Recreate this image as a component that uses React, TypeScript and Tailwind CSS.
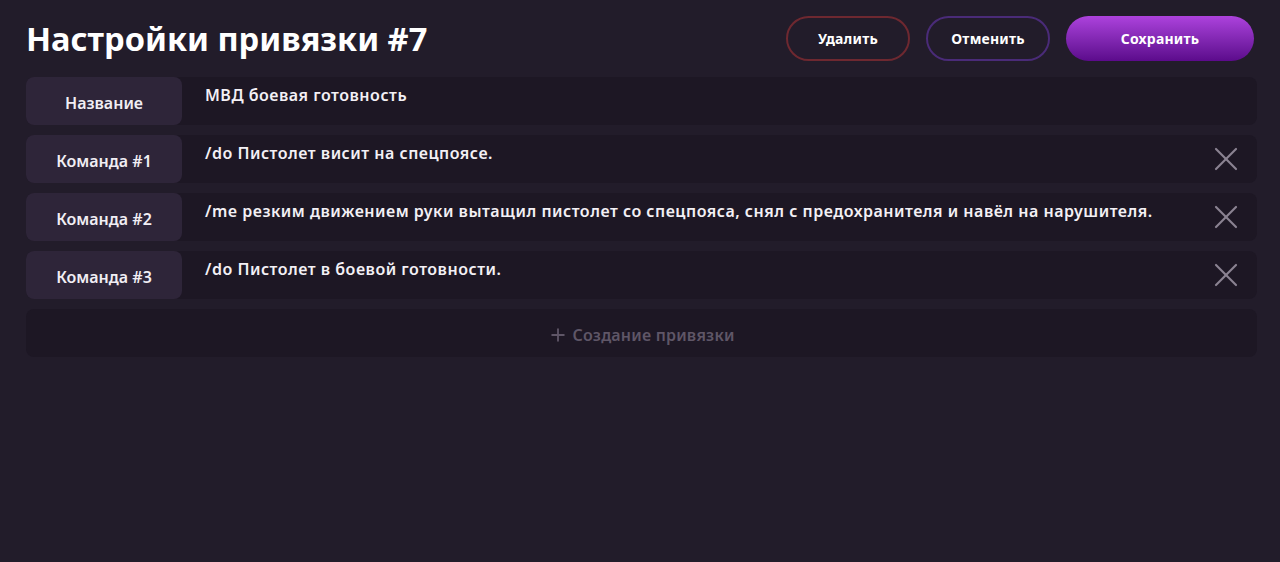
import { X, Plus } from 'lucide-react';

const commands = [
  '/do Пистолет висит на спецпоясе.',
  '/me резким движением руки вытащил пистолет со спецпояса, снял с предохранителя и навёл на нарушителя.',
  '/do Пистолет в боевой готовности.',
];

function Row({ label, value, removable }: { label: string; value: string; removable?: boolean }) {
  return (
    <div className="flex h-12 rounded-lg bg-[#1d1724]">
      <div className="flex w-[156px] shrink-0 items-center justify-center rounded-lg bg-[#2e2539] pt-1 text-[16px] font-semibold text-[#f1eef4]">
        {label}
      </div>
      <div className="flex-1 pl-[23px] pt-[6px] text-[16px] font-semibold tracking-[0.5px] text-[#f3f0f5]">{value}</div>
      {removable && (
        <button className="mr-[11px] flex h-12 w-10 items-center justify-center text-[#8b8392]">
          <X className="h-10 w-10" strokeWidth={1.3} />
        </button>
      )}
    </div>
  );
}

export default function App() {
  return (
    <div
      className="min-h-[562px] w-full bg-[#221c2a] pl-[26px] pr-[23px] pt-[16px]"
      style={{ fontFamily: "'Noto Sans', 'Open Sans', sans-serif" }}
    >
      <div className="flex items-center justify-between">
        <h1 className="text-[32.6px] font-bold leading-[45px] text-white">Настройки привязки #7</h1>
        <div className="flex gap-4 pr-[3px]">
          <button className="h-[45px] w-[124px] rounded-full border-2 border-[#6e2830] text-[14px] font-bold tracking-[0.2px] text-white">
            Удалить
          </button>
          <button className="h-[45px] w-[124px] rounded-full border-2 border-[#4a2b78] text-[14px] font-bold tracking-[0.2px] text-white">
            Отменить
          </button>
          <button className="h-[45px] w-[188px] rounded-full bg-gradient-to-b from-[#ad42dd] to-[#5c0a8c] text-[14px] font-bold tracking-[0.2px] text-white">
            Сохранить
          </button>
        </div>
      </div>

      <div className="mt-[16px] flex flex-col gap-[10px]">
        <Row label="Название" value="МВД боевая готовность" />
        {commands.map((c, i) => (
          <Row key={i} label={`Команда #${i + 1}`} value={c} removable />
        ))}
        <button className="flex h-12 items-center justify-center gap-1 rounded-lg bg-[#1d1724] pt-1 text-[16px] font-semibold tracking-[0.2px] text-[#5f5667]">
          <Plus className="h-5 w-5" strokeWidth={2.2} />
          Создание привязки
        </button>
      </div>
    </div>
  );
}
